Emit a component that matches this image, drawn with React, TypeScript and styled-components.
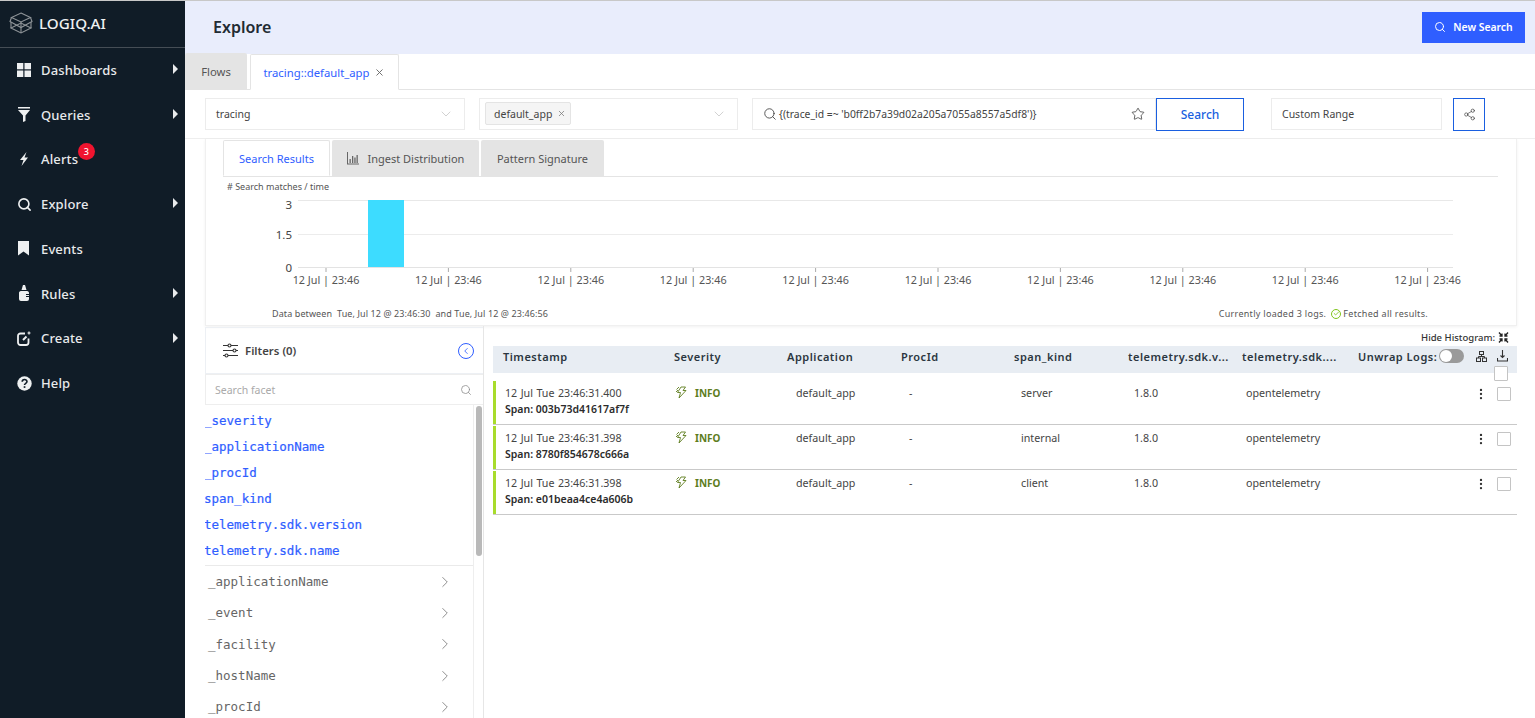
import React from "react";
import styled, { createGlobalStyle } from "styled-components";
import { ChevronRight, ChevronLeft, ChevronDown, Search as SearchIcon, X, Star, Share2, Check, MoreVertical } from "lucide-react";

const Global = createGlobalStyle`
  html, body { margin: 0; padding: 0; background: #fff; }
  body { font-family: "Noto Sans", "Liberation Sans", sans-serif; color: #333; overflow: hidden; }
  * { box-sizing: border-box; }
`;
const MONO = `"DejaVu Sans Mono", "Liberation Mono", monospace`;
const BLUE = "#2f5eff";

const Shell = styled.div`
  display: flex;
  width: 1535px;
  height: 718px;
  border-top: 1px solid #c8c8c8;
  overflow: hidden;
`;
const Sidebar = styled.aside`
  width: 185px;
  flex: none;
  background: #101c27;
  color: #e8eaec;
`;
const Logo = styled.div`
  height: 47px;
  display: flex;
  align-items: center;
  gap: 6px;
  padding: 0 0 2px 9px;
  border-bottom: 1px solid #454d55;
  font-size: 15.2px;
  font-weight: 500;
  color: #eef0f1;
`;
const NavItem = styled.div`
  height: 44.75px;
  display: flex;
  align-items: center;
  padding: 0 0 1px 17px;
  position: relative;
  font-size: 13px;
  font-weight: 500;
  letter-spacing: 0.14px;
`;
const NavIcon = styled.span`
  width: 24px;
  display: flex;
  align-items: center;
`;
const Caret = styled.span`
  position: absolute;
  right: 7px;
  top: 16px;
  width: 0;
  height: 0;
  border-left: 5px solid #e8eaec;
  border-top: 5px solid transparent;
  border-bottom: 5px solid transparent;
`;
const Badge = styled.span`
  position: absolute;
  left: 78px;
  top: 5px;
  width: 17px;
  height: 17px;
  border-radius: 50%;
  background: #f0142f;
  color: #fff;
  font-size: 9px;
  display: flex;
  align-items: center;
  justify-content: center;
`;
const Main = styled.main`
  flex: 1;
  min-width: 0;
  display: flex;
  flex-direction: column;
`;
const Header = styled.header`
  height: 53px;
  flex: none;
  background: #e9edfc;
  display: flex;
  align-items: center;
  justify-content: space-between;
  padding: 0 10px 0 28px;
`;
const Title = styled.h1`
  margin: 0 0 2px;
  font-size: 16px;
  font-weight: 600;
  color: #222b33;
`;
const NewSearch = styled.button`
  width: 103px;
  height: 31px;
  margin-bottom: 1px;
  border: none;
  background: ${BLUE};
  color: #fff;
  font: 600 10.4px "Noto Sans", sans-serif;
  display: flex;
  align-items: center;
  justify-content: center;
  gap: 7px;
`;
const TabBar = styled.div`
  height: 36px;
  flex: none;
  display: flex;
  align-items: flex-end;
  gap: 3px;
  border-bottom: 1px solid #e4e4e4;
`;
const Tab = styled.div<{ $active?: boolean; $w: number }>`
  width: ${(p) => p.$w}px;
  height: 36px;
  margin-bottom: ${(p) => (p.$active ? "-1px" : "0")};
  display: flex;
  align-items: center;
  justify-content: center;
  gap: 5px;
  font-size: 11.3px;
  background: ${(p) => (p.$active ? "#fff" : "#e4e4e4")};
  color: ${(p) => (p.$active ? BLUE : "#555")};
  border: ${(p) => (p.$active ? "1px solid #e4e4e4" : "none")};
  border-bottom: ${(p) => (p.$active ? "1px solid #fff" : "none")};
  border-radius: 2px 2px 0 0;
`;
const CardTab = styled(Tab)`
  font-size: 11px;
`;
const Toolbar = styled.div`
  height: 49px;
  flex: none;
  display: flex;
  padding: 8px 0 0 20px;
  border-bottom: 1px solid #eee;
`;
const Field = styled.div<{ $w: number; $ml?: number }>`
  width: ${(p) => p.$w}px;
  margin-left: ${(p) => p.$ml ?? 0}px;
  height: 32px;
  border: 1px solid #ececec;
  display: flex;
  align-items: center;
  padding: 0 10px 1px 10px;
  font-size: 10.5px;
  color: #444;
  justify-content: space-between;
`;
const QueryText = styled.span`
  flex: 1;
  margin-left: 2px;
  font-size: 10.35px;
  white-space: nowrap;
`;
const Chip = styled.span`
  height: 23px;
  margin-left: -5px;
  padding: 0 4px 0 8px;
  display: flex;
  align-items: center;
  gap: 5px;
  background: #f5f5f5;
  border: 1px solid #e4e4e4;
  border-radius: 2px;
`;
const OutlineButton = styled.button<{ $w: number; $ml?: number }>`
  width: ${(p) => p.$w}px;
  margin-left: ${(p) => p.$ml ?? 0}px;
  height: 33px;
  border: 1px solid #1a5fe0;
  background: #fff;
  color: #1a5fe0;
  font: 500 12px "Noto Sans", sans-serif;
  padding: 0;
  display: flex;
  align-items: center;
  justify-content: center;
`;
const Card = styled.section`
  height: 187px;
  flex: none;
  margin: 0 18px 0 20px;
  border: 1px solid #f0f0f0;
  border-top: none;
  box-shadow: 0 1px 3px rgba(0, 0, 0, 0.06);
  padding: 1px 18px 0 17px;
`;
const CardTabs = styled.div`
  display: flex;
  height: 37px;
  gap: 2px;
  border-bottom: 1px solid #e4e4e4;
`;
const ChartCaption = styled.div`
  font-size: 9px;
  color: #555;
  margin: 3px 0 0 4px;
  height: 14px;
  line-height: 13px;
`;
const ChartSvg = styled.svg`
  display: block;
  margin-left: -18px;
`;
const ChartFoot = styled.div`
  display: flex;
  justify-content: space-between;
  font-size: 9px;
  color: #555;
  padding: 0 70px 0 49px;
  letter-spacing: 0.1px;
`;
const Fetched = styled.span`
  display: flex;
  align-items: center;
  gap: 5px;
  letter-spacing: 0.3px;
`;
const Ok = styled.span`
  display: inline-flex;
  align-items: center;
  justify-content: center;
  width: 10px;
  height: 10px;
  border: 1px solid #7fc41c;
  border-radius: 50%;
  margin: 0 -3px 0 0;
`;
const Lower = styled.div`
  flex: 1;
  min-height: 0;
  display: flex;
  padding-left: 20px;
`;
const FacetPanel = styled.div`
  width: 279px;
  flex: none;
  border-right: 1px solid #e6e6e6;
  display: flex;
  flex-direction: column;
  overflow: hidden;
`;
const FilterHead = styled.div`
  height: 47px;
  flex: none;
  margin-top: 1px;
  border: 1px solid #edf0f4;
  border-right: none;
  display: flex;
  align-items: center;
  padding: 0 9px 0 17px;
  font-size: 11.4px;
  font-weight: 600;
  color: #444;
  gap: 7px;
`;
const CollapseBtn = styled.span`
  margin-left: auto;
  width: 16px;
  height: 16px;
  border: 1.5px solid ${BLUE};
  border-radius: 50%;
  display: flex;
  align-items: center;
  justify-content: center;
  color: ${BLUE};
`;
const FacetSearch = styled.div`
  height: 31px;
  flex: none;
  border: 1px solid #eee;
  border-right: none;
  display: flex;
  justify-content: space-between;
  align-items: center;
  padding: 0 11px 0 9px;
  font-size: 10.5px;
  color: #aaa;
`;
const FacetScroll = styled.div`
  position: relative;
  flex: 1;
  min-height: 0;
  padding-right: 10px;
`;
const Scrollbar = styled.div`
  position: absolute;
  top: 0;
  right: 0;
  bottom: 0;
  width: 10px;
  border-left: 1px solid #eee;
  &::after {
    content: "";
    position: absolute;
    top: 1px;
    left: 2px;
    width: 6px;
    height: 150px;
    border-radius: 3px;
    background: #b9b9b9;
  }
`;
const Selected = styled.div`
  padding: 3px 0 1px;
  border-bottom: 1px solid #eaeaea;
  height: 161px;
`;
const BlueItem = styled.div`
  margin-left: -1px;
  font: 12.5px/26px ${MONO};
  color: ${BLUE};
  -webkit-text-stroke: 0.2px ${BLUE};
`;
const FacetRow = styled.div`
  height: 31.3px;
  display: flex;
  align-items: center;
  justify-content: space-between;
  padding: 0 19px 0 3px;
  font: 12.5px ${MONO};
  color: #666;
`;
const Results = styled.div`
  flex: 1;
  min-width: 0;
  padding: 0 18px 0 9px;
  position: relative;
`;
const HideRow = styled.div`
  height: 20px;
  display: flex;
  justify-content: flex-end;
  align-items: center;
  gap: 3px;
  padding: 2px 8px 0 0;
  font-size: 9.5px;
  font-weight: 500;
  color: #333;
`;
const TableHead = styled.div`
  height: 27px;
  background: #e8edf3;
  display: grid;
  grid-template-columns: 171px 113px 114px 113px 114px 114px 116px 1fr;
  align-items: center;
  padding: 0 0 7px 10px;
  font-size: 11px;
  font-weight: 600;
  letter-spacing: 0.5px;
  color: #2b3640;
  white-space: nowrap;
  position: relative;
`;
const HeadTools = styled.div`
  display: flex;
  align-items: center;
  gap: 3px;
`;
const ToolIcon = styled.svg<{ $ml: number }>`
  margin-left: ${(p) => p.$ml}px;
  flex: none;
`;
const Toggle = styled.span`
  width: 25px;
  height: 14px;
  border-radius: 7px;
  background: #9a9a9a;
  margin-left: -1px;
  position: relative;
  flex: none;
  &::after {
    content: "";
    position: absolute;
    left: 1px;
    top: 1px;
    width: 12px;
    height: 12px;
    border-radius: 50%;
    background: #fff;
  }
`;
const Box = styled.span`
  display: block;
  width: 14px;
  height: 14px;
  background: #fff;
  border: 1px solid #c4c4c4;
  border-radius: 1px;
  flex: none;
`;
const HeadBox = styled(Box)`
  position: absolute;
  right: 9px;
  top: 20px;
  height: 15px;
`;
const Rows = styled.div`
  padding-top: 8px;
`;
const Row = styled.div`
  height: 44px;
  margin-bottom: 1px;
  display: grid;
  grid-template-columns: 170px 121px 113px 112px 113px 112px 1fr auto;
  padding: 5px 0 0 12px;
  position: relative;
  border-bottom: 1px solid #c9c9c9;
  font-size: 10.7px;
  color: #444;
  &::before {
    content: "";
    position: absolute;
    left: 0;
    top: 0;
    bottom: 0;
    width: 3px;
    background: #a8dc2c;
  }
`;
const Cell = styled.div`
  line-height: 15px;
  white-space: nowrap;
  word-spacing: 0.7px;
`;
const Span = styled.div`
  font-weight: 600;
  font-size: 10.5px;
  color: #2b2b2b;
  margin-top: 1px;
  word-spacing: 0;
`;
const Info = styled.div`
  display: flex;
  align-items: flex-start;
  gap: 7px;
  font-weight: 700;
  font-size: 10px;
  color: #5e7d1d;
  line-height: 15px;
`;
const Actions = styled.div`
  display: flex;
  justify-content: flex-end;
  align-items: flex-start;
  gap: 9px;
  padding: 1px 6px 0 0;
`;

const ticks = Array.from({ length: 10 }, (_, i) => 326 + i * 122.4);

const Chart = () => (
  <ChartSvg width="1310" height="113" viewBox="205 194 1310 113">
    <line x1="298" x2="1453" y1="200.5" y2="200.5" stroke="#e8e8e8" />
    <line x1="298" x2="1453" y1="234.5" y2="234.5" stroke="#ececec" />
    <line x1="298" x2="1453" y1="267.5" y2="267.5" stroke="#e3e3e3" />
    <rect x="368" y="200" width="36" height="67" fill="#3ddcff" />
    {[["3", 209], ["1.5", 239], ["0", 272]].map(([t, y]) => (
      <text key={t} x="292" y={y as number} textAnchor="end" fontSize="11.5" fill="#444" fontFamily="Noto Sans">{t}</text>
    ))}
    {ticks.map((x) => (
      <g key={x}>
        <line x1={x} x2={x} y1="268" y2="272" stroke="#aaa" />
        <text x={x} y="284" textAnchor="middle" fontSize="10.8" fill="#555" fontFamily="Noto Sans">12 Jul | 23:46</text>
      </g>
    ))}
  </ChartSvg>
);

const Dash = () => (
  <svg width="14" height="14" viewBox="0 0 14 14" fill="#eef0f1"><rect width="6.3" height="6.3" /><rect x="7.5" width="6.5" height="6.3" /><rect y="7.5" width="6.3" height="6.5" /><rect x="7.5" y="7.5" width="6.5" height="6.5" /></svg>
);
const Funnel = () => (
  <svg width="14" height="15" viewBox="0 0 14 15" fill="#eef0f1"><rect x="1" width="12" height="1.5" /><path d="M1 3h12L8.5 8.5V14L6 15V8.5z" /></svg>
);
const Bolt = () => (
  <svg width="14" height="14" viewBox="0 0 14 14" fill="#eef0f1"><path d="M9.5 0 3 8h3.5L4.5 14 11 5.5H7.5z" /></svg>
);
const Mark = () => (
  <svg width="13" height="15" viewBox="0 0 13 15" fill="#eef0f1"><path d="M1 0h11v14.5L6.5 10.5 1 14.5z" /></svg>
);
const Bottle = () => (
  <svg width="14" height="17" viewBox="0 0 14 17" fill="#eef0f1"><path d="M6 0h2l1.500 5h-5z" /><path d="M4 6h6c1.500 0 2 1 2 2v1H9v1h3v1H9v1h3v2a2 2 0 0 1-2 2H4a2 2 0 0 1-2-2V8c0-1 .5-2 2-2z" /></svg>
);
const Edit = () => (
  <svg width="15" height="15" viewBox="0 0 15 15" fill="none" stroke="#eef0f1" strokeWidth="1.800"><path d="M8 2.500H3.500a2.500 2.500 0 0 0-2.500 2.500v6.500a2.500 2.500 0 0 0 2.500 2.500H9a2.500 2.500 0 0 0 2.500-2.500V7.500" /><path d="M6 9l3.500-3.500" strokeWidth="2" /><path d="M12 .5v3M10.500 2h3" strokeWidth="1.200" /></svg>
);
const Help = () => (
  <svg width="15" height="15" viewBox="0 0 15 15"><circle cx="7.5" cy="7.5" r="7.2" fill="#eef0f1" /><path d="M5.200 5.800c0-3 4.800-3 4.800-.2 0 1.800-2.500 1.700-2.500 3.500" fill="none" stroke="#101c27" strokeWidth="1.600" /><rect x="6.700" y="10.200" width="1.700" height="1.700" fill="#101c27" /></svg>
);
const LogoMark = () => (
  <svg width="24" height="22" viewBox="0 0 24 22" fill="none" stroke="#8f9498" strokeWidth="1.100">
    <path d="M12 1 21.500 5.500 12 10 2.500 5.500z" />
    <path d="M2.500 5.500 1 9.500 12 15.500 23 9.500 21.500 5.500" />
    <path d="M12 10V15.500" />
    <path d="M2 16 12 21 22 16 12 11z" />
    <path d="M12 15.500V21M2 10v6M22 10v6" />
  </svg>
);
const Filters = () => (
  <svg width="15" height="15" viewBox="0 0 15 15" fill="none" stroke="#333" strokeWidth="1.100">
    <path d="M0 2.500h5M8 2.500h7M0 7.500h10M13 7.500h2M0 12.500h2M5 12.500h10" />
    <circle cx="6.500" cy="2.500" r="1.500" /><circle cx="11.500" cy="7.500" r="1.500" /><circle cx="3.500" cy="12.500" r="1.500" />
  </svg>
);
const CollapseArrows = () => (
  <svg width="11" height="11" viewBox="0 0 11 11" fill="none" stroke="#222" strokeWidth="1.300">
    <path d="M1 .5 4 4M4 1.500V4H1.500M10 .5 7 4M7 1.500V4h2.500M1 10.500 4 7M4 9.500V7H1.500M10 10.500 7 7M7 9.500V7h2.500" />
  </svg>
);
const Org = () => (
  <ToolIcon $ml={9} width="11" height="11" viewBox="0 0 11 11" fill="none" stroke="#333" strokeWidth="1">
    <rect x="3.500" y=".5" width="4" height="3" />
    <rect x=".5" y="7" width="4" height="3.500" />
    <rect x="6.500" y="7" width="4" height="3.500" />
    <path d="M5.500 3.500v2M2.500 7V5.500h6V7" />
  </ToolIcon>
);
const Tray = () => (
  <ToolIcon $ml={7} width="11" height="12" viewBox="0 0 11 12" fill="none" stroke="#333" strokeWidth="1.100">
    <path d="M5.500 0v7M3.500 5.500l2 2 2-2M.5 8v3h10V8" />
  </ToolIcon>
);
const Flash = () => (
  <svg width="13" height="13" viewBox="0 0 13 13" fill="none" stroke="#5e7d1d" strokeWidth=".9">
    <path d="M6 1h4.500L8 4.500h3L4 12l1.500-5.500H2.500z" />
    <path d="M1.500 3.500 4 1M1 6l2-2" />
  </svg>
);
const Bars = () => (
  <svg width="13" height="13" viewBox="0 0 13 13" fill="#666">
    <rect x="0" y="0" width="1" height="12" /><rect y="11.500" width="12" height="1" />
    <rect x="2.500" y="7" width="1.300" height="4" /><rect x="5" y="4" width="1.300" height="7" />
    <rect x="7.300" y="5.500" width="1.300" height="5.500" /><rect x="9.500" y="3" width="1.300" height="8" />
  </svg>
);

const nav: [string, React.ReactNode, boolean][] = [
  ["Dashboards", <Dash />, true],
  ["Queries", <Funnel />, true],
  ["Alerts", <Bolt />, false],
  ["Explore", <SearchIcon size={15} strokeWidth={2.6} color="#eef0f1" />, true],
  ["Events", <Mark />, false],
  ["Rules", <Bottle />, true],
  ["Create", <Edit />, true],
  ["Help", <Help />, false],
];

const rows = [
  ["12 Jul Tue 23:46:31.400", "003b73d41617af7f", "server"],
  ["12 Jul Tue 23:46:31.398", "8780f854678c666a", "internal"],
  ["12 Jul Tue 23:46:31.398", "e01beaa4ce4a606b", "client"],
];

export default function App() {
  return (
    <Shell>
      <Global />
      <Sidebar>
        <Logo><LogoMark />LOGIQ.AI</Logo>
        {nav.map(([label, icon, caret]) => (
          <NavItem key={label}>
            <NavIcon>{icon}</NavIcon>
            {label}
            {caret && <Caret />}
            {label === "Alerts" && <Badge>3</Badge>}
          </NavItem>
        ))}
      </Sidebar>
      <Main>
        <Header>
          <Title>Explore</Title>
          <NewSearch><SearchIcon size={12} />New Search</NewSearch>
        </Header>
        <TabBar>
          <Tab $w={62}>Flows</Tab>
          <Tab $active $w={149}>tracing::default_app <X size={11} color="#666" /></Tab>
        </TabBar>
        <Toolbar>
          <Field $w={260}>tracing<ChevronDown size={16} color="#bbb" strokeWidth={1} /></Field>
          <Field $w={259} $ml={14}><Chip>default_app <X size={9} color="#777" /></Chip><ChevronDown size={16} color="#bbb" strokeWidth={1} /></Field>
          <Field $w={404} $ml={14}>
            <SearchIcon size={14} color="#444" strokeWidth={1.5} />
            <QueryText>{"{(trace_id =~ 'b0ff2b7a39d02a205a7055a8557a5df8')}"}</QueryText>
            <Star size={14} color="#333" strokeWidth={1.3} />
          </Field>
          <OutlineButton $w={88}>Search</OutlineButton>
          <Field $w={171} $ml={27}>Custom Range</Field>
          <OutlineButton $w={32} $ml={11}><Share2 size={13} color="#444" strokeWidth={1.3} /></OutlineButton>
        </Toolbar>
        <Card>
          <CardTabs>
            <CardTab $active $w={107}>Search Results</CardTab>
            <CardTab $w={147}><Bars />&nbsp;Ingest Distribution</CardTab>
            <CardTab $w={123}>Pattern Signature</CardTab>
          </CardTabs>
          <ChartCaption># Search matches / time</ChartCaption>
          <Chart />
          <ChartFoot>
            <span>Data between&nbsp; Tue, Jul 12 @ 23:46:30&nbsp; and Tue, Jul 12 @ 23:46:56</span>
            <Fetched>Currently loaded 3 logs. <Ok><Check size={7} color="#7fc41c" strokeWidth={3} /></Ok> Fetched all results.</Fetched>
          </ChartFoot>
        </Card>
        <Lower>
          <FacetPanel>
            <FilterHead>
              <Filters />Filters (0)
              <CollapseBtn><ChevronLeft size={10} strokeWidth={2} /></CollapseBtn>
            </FilterHead>
            <FacetSearch>Search facet<SearchIcon size={12} color="#888" strokeWidth={1.5} /></FacetSearch>
            <FacetScroll>
              <Scrollbar />
              <Selected>
                {["_severity", "_applicationName", "_procId", "span_kind", "telemetry.sdk.version", "telemetry.sdk.name"].map((t) => (
                  <BlueItem key={t}>{t}</BlueItem>
                ))}
              </Selected>
              {["_applicationName", "_event", "_facility", "_hostName", "_procId"].map((t) => (
                <FacetRow key={t}>{t}<ChevronRight size={18} color="#777" strokeWidth={1.1} /></FacetRow>
              ))}
            </FacetScroll>
          </FacetPanel>
          <Results>
            <HideRow>Hide Histogram: <CollapseArrows /></HideRow>
            <TableHead>
              <span>Timestamp</span>
              <span>Severity</span>
              <span>Application</span>
              <span>ProcId</span>
              <span>span_kind</span>
              <span>telemetry.sdk.v...</span>
              <span>telemetry.sdk....</span>
              <HeadTools>
                Unwrap Logs: <Toggle />
                <Org />
                <Tray />
              </HeadTools>
              <HeadBox />
            </TableHead>
            <Rows>
              {rows.map(([t, s, k]) => (
                <Row key={s}>
                  <Cell>{t}<Span>Span: {s}</Span></Cell>
                  <Info><Flash />INFO</Info>
                  <Cell>default_app</Cell>
                  <Cell>-</Cell>
                  <Cell>{k}</Cell>
                  <Cell>1.8.0</Cell>
                  <Cell>opentelemetry</Cell>
                  <Actions><MoreVertical size={14} color="#333" /><Box /></Actions>
                </Row>
              ))}
            </Rows>
          </Results>
        </Lower>
      </Main>
    </Shell>
  );
}
